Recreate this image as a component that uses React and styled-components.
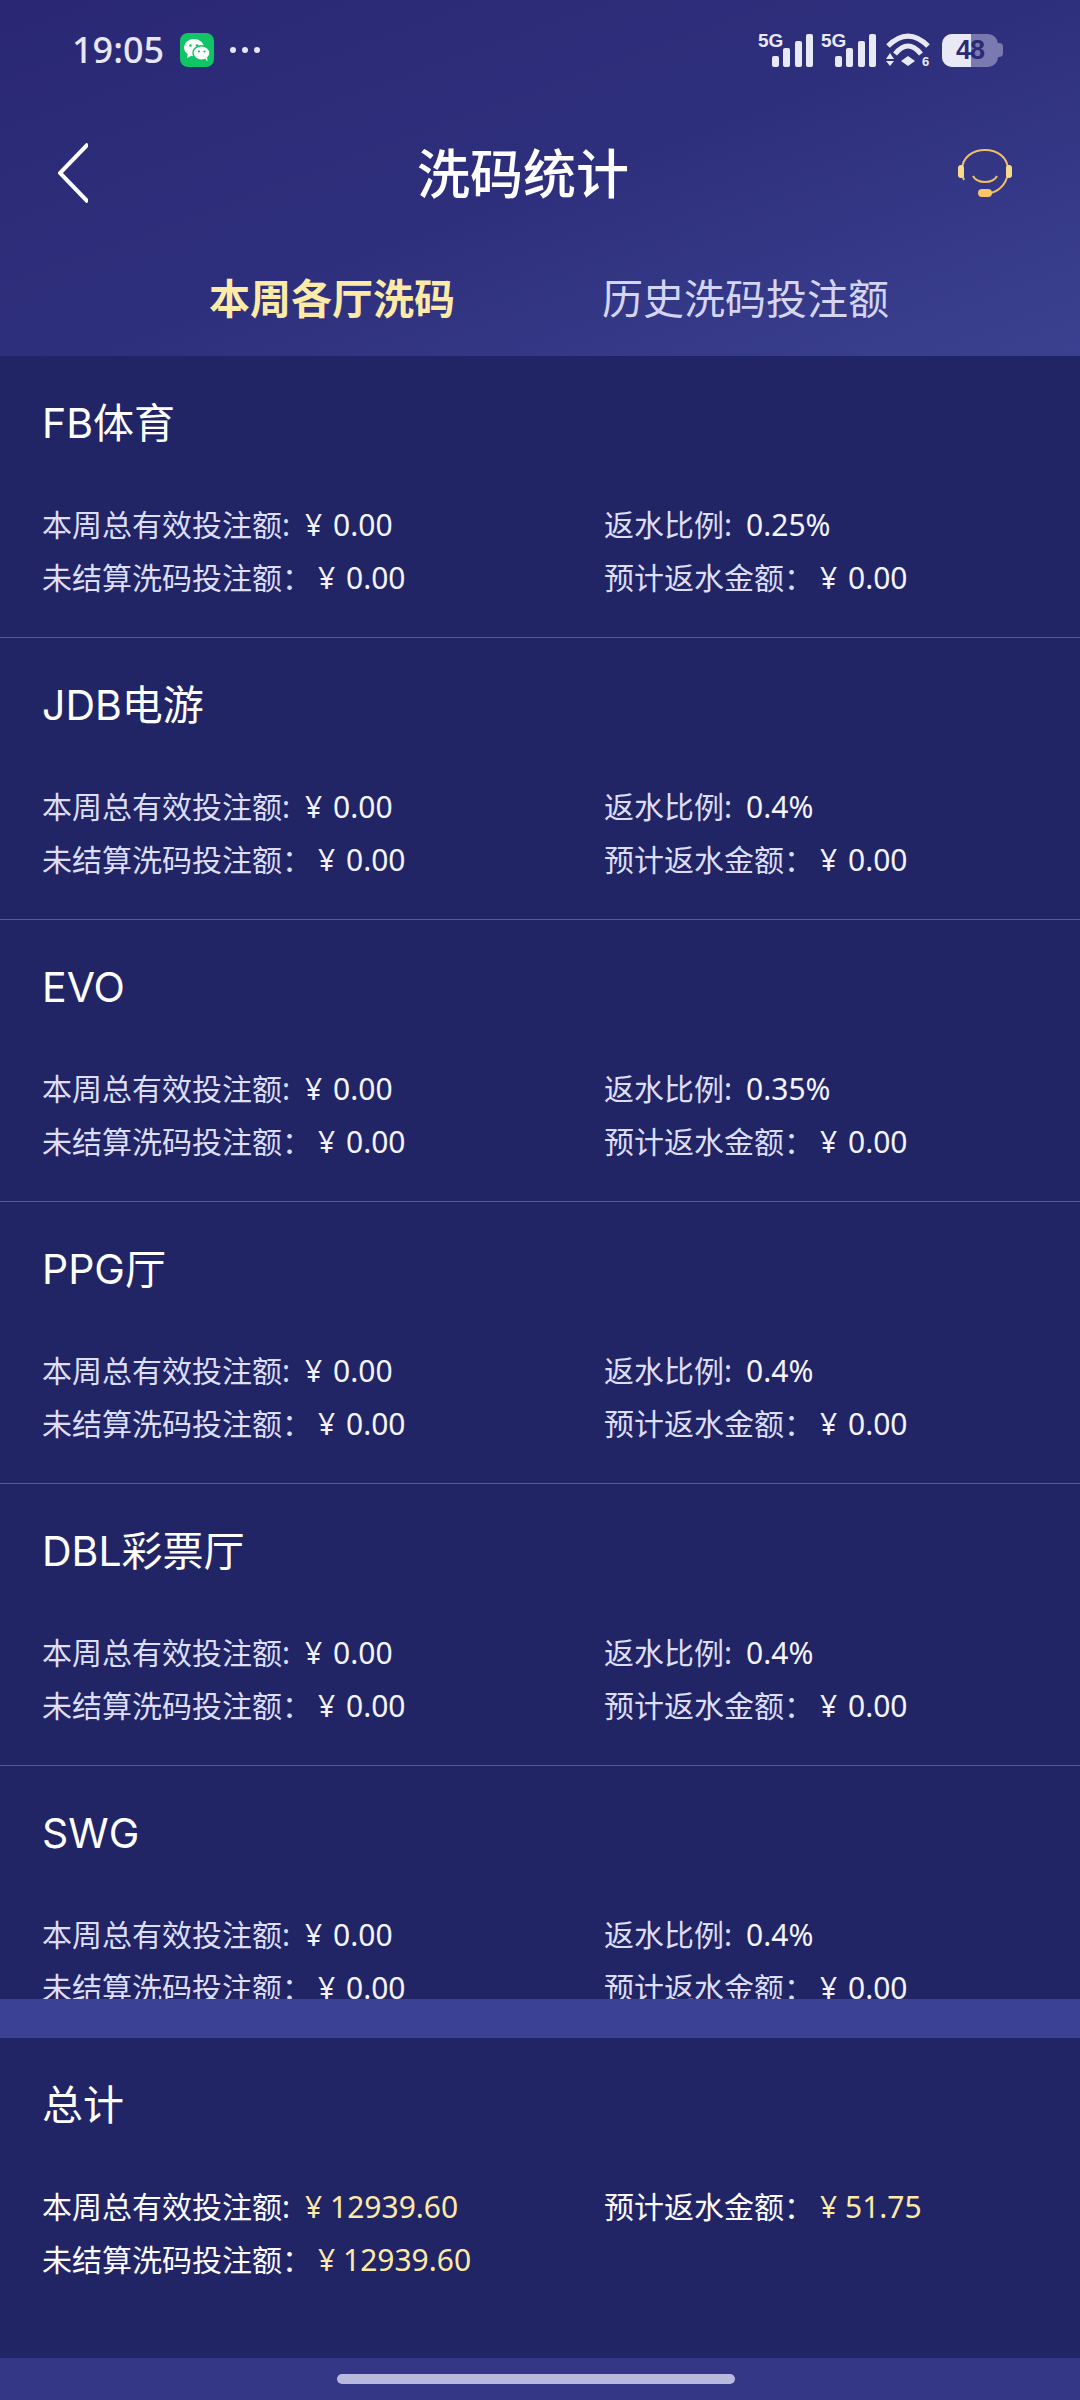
import React from "react";
import styled, { createGlobalStyle } from "styled-components";

const halls = [
  { name: "FB体育", rate: "0.25%" },
  { name: "JDB电游", rate: "0.4%" },
  { name: "EVO", rate: "0.35%" },
  { name: "PPG厅", rate: "0.4%" },
  { name: "DBL彩票厅", rate: "0.4%" },
  { name: "SWG", rate: "0.4%" }
];

const GlobalStyle = createGlobalStyle`
  html, body {
    margin: 0;
    padding: 0;
    background: #212566;
  }
  * {
    box-sizing: border-box;
  }
`;

const Page = styled.div`
  width: 1080px;
  height: 2400px;
  display: flex;
  flex-direction: column;
  overflow: hidden;
  background: #212566;
  font-family: "Noto Sans", "Noto Sans CJK SC", sans-serif;
`;

const Header = styled.header`
  height: 356px;
  flex: none;
  background: linear-gradient(160deg, #2a2875 0%, #2e2f7c 50%, #3b4190 100%);
`;

const StatusBar = styled.div`
  height: 100px;
  padding: 0 77px 0 72px;
  display: flex;
  align-items: center;
  justify-content: space-between;
  color: #e6e6f5;
`;

const StatusGroup = styled.div`
  display: flex;
  align-items: center;
`;

const Time = styled.span`
  font-size: 36px;
  font-weight: 500;
  line-height: 1;
  margin-right: 16px;
`;

const AppBadge = styled.div`
  width: 34px;
  height: 34px;
  border-radius: 8px;
  background: #0fc565;
  display: flex;
  align-items: center;
  justify-content: center;
  margin-right: 16px;
`;

const Dots = styled.div`
  display: flex;
  gap: 6px;
`;

const Dot = styled.i`
  width: 6px;
  height: 6px;
  border-radius: 50%;
  background: #e6e6f5;
`;

const StatusIcon = styled.svg`
  display: block;
  flex: none;
  margin-left: ${p => p.$gap}px;
`;

const Battery = styled.div`
  position: relative;
  width: 56px;
  height: 33px;
  margin-left: 11px;
  border-radius: 10px;
  background: #7a7ab0;
  overflow: hidden;
  display: flex;
  align-items: center;
  justify-content: center;
  font-family: "Liberation Sans", sans-serif;
  font-size: 27px;
  line-height: 33px;
  font-weight: 700;
  letter-spacing: -1px;
  color: #2a2a76;
`;

const BatteryFill = styled.div`
  position: absolute;
  left: 0;
  top: 0;
  bottom: 0;
  background: #e9e9f6;
`;

const BatteryText = styled.span`
  position: relative;
`;

const BatteryCap = styled.div`
  width: 5px;
  height: 14px;
  border-radius: 0 4px 4px 0;
  background: #7a7ab0;
`;

const Nav = styled.div`
  height: 100px;
  margin-top: 23px;
  padding: 0 68px 0 58px;
  display: flex;
  align-items: center;
  justify-content: space-between;
`;

const NavTitle = styled.h1`
  margin: 0;
  font-size: 53px;
  font-weight: 500;
  line-height: 1;
  color: #fff;
`;

const Tabs = styled.div`
  height: 116px;
  margin-top: 17px;
  padding-left: 209px;
  display: flex;
  align-items: center;
  gap: 147px;
`;

const Tab = styled.div`
  font-size: 41px;
  line-height: 1;
  font-weight: ${p => (p.$active ? 700 : 400)};
  color: ${p => (p.$active ? "#fdeaa6" : "#d3d5f2")};
`;

const List = styled.div`
  height: 1643px;
  flex: none;
  overflow: hidden;
`;

const Block = styled.section`
  padding: 39px 0 ${p => (p.$total ? 0 : 32)}px 42px;
  flex: none;
  height: ${p => (p.$total ? "320px" : "282px")};
  border-bottom: ${p => (p.$total ? "none" : "1px solid #565a96")};
`;

const BlockTitle = styled.h2`
  margin: 0 0 47px;
  font-family: Inter, "Noto Sans CJK SC", sans-serif;
  font-size: 41px;
  font-weight: 400;
  line-height: 56px;
  color: #fff;
`;

const Grid = styled.div`
  display: grid;
  grid-template-columns: 562px 1fr;
  grid-auto-rows: 53px;
  align-items: center;
`;

const Field = styled.div`
  font-size: 30px;
  line-height: 53px;
  white-space: nowrap;
  color: ${p => (p.$bright ? "#fbfbff" : "#dcddf7")};
`;

const Value = styled.span`
  margin-left: ${p => p.$gap}px;
  word-spacing: ${p => (p.$gold ? 0 : 3)}px;
  color: ${p => (p.$gold ? "#fdeaa6" : "#f4f4ff")};
`;

const Band = styled.div`
  height: 39px;
  flex: none;
  background: #3b4296;
`;

const HomeBar = styled.div`
  height: 42px;
  flex: none;
  background: #343785;
  display: flex;
  justify-content: center;
  padding: 16px 9px 0 0;
`;

const HomePill = styled.div`
  width: 398px;
  height: 10px;
  border-radius: 5px;
  background: #b8b9dc;
`;

const WeChatIcon = () => (
  <svg width="28" height="24" viewBox="0 0 28 24">
    <ellipse cx="11" cy="9.5" rx="10" ry="8.5" fill="#fff" />
    <path d="M5 15l-1 5 6-3z" fill="#fff" />
    <ellipse cx="18.5" cy="15" rx="8.5" ry="7.2" fill="#fff" stroke="#0fc565" strokeWidth="1.4" />
    <path d="M22 20.5l2.5 3-.5-4.5z" fill="#fff" />
    <circle cx="7.5" cy="7.5" r="1.3" fill="#0fc565" />
    <circle cx="14" cy="7.5" r="1.3" fill="#0fc565" />
    <circle cx="16" cy="13.5" r="1.1" fill="#0fc565" />
    <circle cx="21.5" cy="13.5" r="1.1" fill="#0fc565" />
  </svg>
);

const SignalIcon = ({ gap }) => (
  <StatusIcon $gap={gap} width="55" height="44" viewBox="0 -4 55 44">
    <text x="0" y="15" fontFamily="Liberation Sans, sans-serif" fontSize="19" fontWeight="700" fill="#e9e9f6">
      5G
    </text>
    <rect x="14" y="24" width="7" height="11" rx="2" fill="#e9e9f6" />
    <rect x="25" y="16" width="7" height="19" rx="2" fill="#e9e9f6" />
    <rect x="37" y="9" width="7" height="26" rx="2" fill="#e9e9f6" />
    <rect x="48" y="2" width="7" height="33" rx="2" fill="#e9e9f6" />
  </StatusIcon>
);

const WifiIcon = () => (
  <StatusIcon $gap={10} width="45" height="44" viewBox="0 -5 45 44">
    <path d="M2 13Q22-7 42 13" fill="none" stroke="#e9e9f6" strokeWidth="5" />
    <path d="M9 21Q22 5 35 21" fill="none" stroke="#e9e9f6" strokeWidth="5" />
    <path d="M15 28l7-5 7 5-7 5z" fill="#e9e9f6" />
    <path d="M0 26l4-6 4 6zM0 28h8l-4 5z" fill="#e9e9f6" />
    <text x="36" y="33" fontFamily="Liberation Sans, sans-serif" fontSize="13" fontWeight="700" fill="#e9e9f6">
      6
    </text>
  </StatusIcon>
);

const BackIcon = () => (
  <svg width="30" height="60" viewBox="0 0 30 60">
    <path d="M30 1L2 30l28 29" fill="none" stroke="#fff" strokeWidth="4" />
  </svg>
);

const HeadsetIcon = () => (
  <svg width="54" height="50" viewBox="0 0 54 50">
    <path d="M4 22C4 9 15 2 27 2s23 7 23 20c0 12-7 20-17 23" fill="none" stroke="#eebf68" strokeWidth="2" />
    <path d="M4 22c0 4 1 8 2 10" fill="none" stroke="#eebf68" strokeWidth="2" />
    <rect x="0" y="17" width="6" height="13" rx="3" fill="#f9d98c" />
    <rect x="48" y="17" width="6" height="13" rx="3" fill="#f9d98c" />
    <path d="M15 28c4 8 20 8 24 0" fill="none" stroke="#eebf68" strokeWidth="2" />
    <rect x="20" y="41" width="14" height="8" rx="4" fill="#f8c666" />
  </svg>
);

const Stats = ({ week, pending, refund, rate, gold, bright }) => (
  <Grid>
    <Field $bright={bright}>
      本周总有效投注额:
      <Value $gap={15} $gold={gold}>¥ {week}</Value>
    </Field>
    {rate ? (
      <Field>
        返水比例:
        <Value $gap={14}>{rate}</Value>
      </Field>
    ) : (
      <Field $bright={bright}>
        预计返水金额：
        <Value $gap={6} $gold={gold}>¥ {refund}</Value>
      </Field>
    )}
    <Field $bright={bright}>
      未结算洗码投注额：
      <Value $gap={6} $gold={gold}>¥ {pending}</Value>
    </Field>
    {rate && (
      <Field>
        预计返水金额：
        <Value $gap={6}>¥ {refund}</Value>
      </Field>
    )}
  </Grid>
);

const App = () => (
  <Page>
    <GlobalStyle />
    <Header>
      <StatusBar>
        <StatusGroup>
          <Time>19:05</Time>
          <AppBadge>
            <WeChatIcon />
          </AppBadge>
          <Dots>
            <Dot />
            <Dot />
            <Dot />
          </Dots>
        </StatusGroup>
        <StatusGroup>
          <SignalIcon gap={0} />
          <SignalIcon gap={8} />
          <WifiIcon />
          <Battery>
            <BatteryFill style={{ width: "52%" }} />
            <BatteryText>48</BatteryText>
          </Battery>
          <BatteryCap />
        </StatusGroup>
      </StatusBar>
      <Nav>
        <BackIcon />
        <NavTitle>洗码统计</NavTitle>
        <HeadsetIcon />
      </Nav>
      <Tabs>
        <Tab $active>本周各厅洗码</Tab>
        <Tab>历史洗码投注额</Tab>
      </Tabs>
    </Header>
    <List>
      {halls.map(hall => (
        <Block key={hall.name}>
          <BlockTitle>{hall.name}</BlockTitle>
          <Stats week="0.00" pending="0.00" refund="0.00" rate={hall.rate} />
        </Block>
      ))}
    </List>
    <Band />
    <Block $total>
      <BlockTitle>总计</BlockTitle>
      <Stats week="12939.60" pending="12939.60" refund="51.75" gold bright />
    </Block>
    <HomeBar>
      <HomePill />
    </HomeBar>
  </Page>
);

export default App;
